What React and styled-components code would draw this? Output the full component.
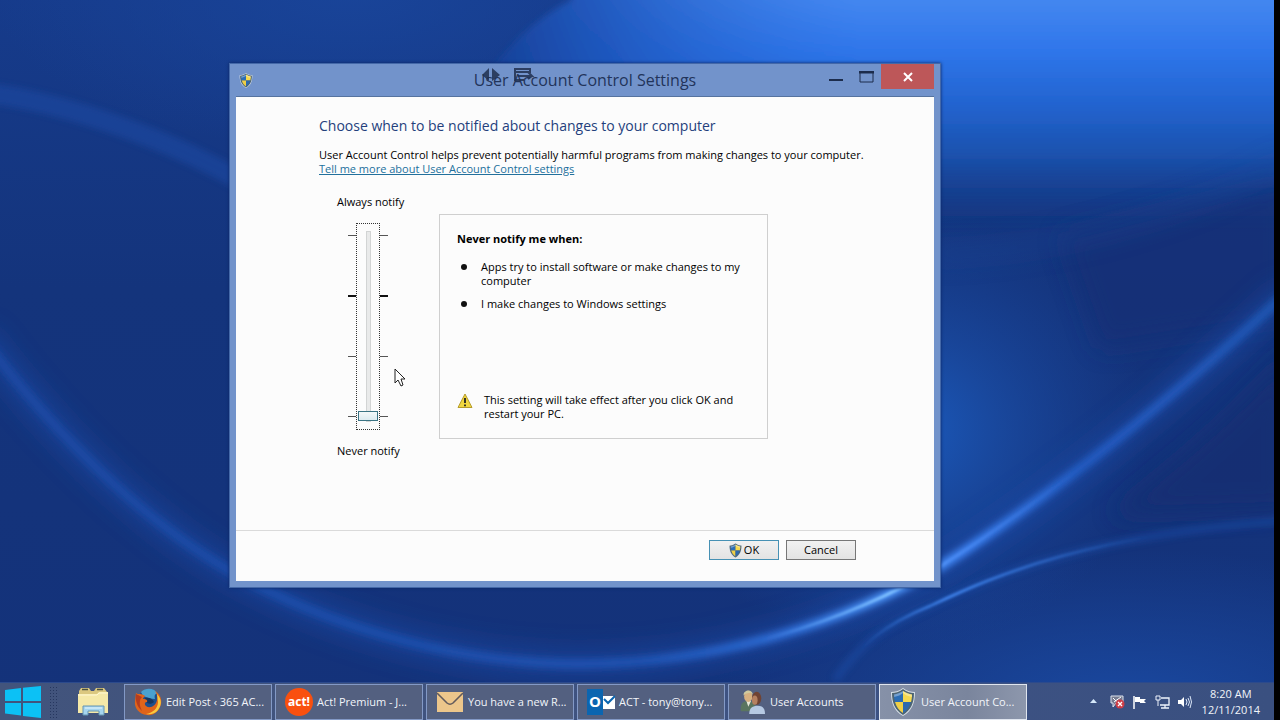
import React, { useState } from 'react';
import styled, { createGlobalStyle } from 'styled-components';

const GlobalStyle = createGlobalStyle`
  * {
    box-sizing: border-box;
  }

  body {
    margin: 0;
    font-family: "Open Sans", "Noto Sans", sans-serif;
    font-size: 11px;
    line-height: 14px;
    color: #000;
  }

  h1, h2, h3, p, ul {
    margin: 0;
    padding: 0;
    font-weight: normal;
  }

  button {
    font: inherit;
    color: inherit;
    padding: 0;
    cursor: pointer;
  }

  svg {
    display: block;
    flex: none;
  }
`;

const Screen = styled.div`
  position: relative;
  display: flex;
  flex-direction: column;
  min-height: 100vh;
  overflow: hidden;
  background: #14347f;
  border-right: 6px solid #000;
`;

const Wallpaper = styled.svg`
  position: absolute;
  top: 0;
  left: 0;
  width: 100%;
  height: 100%;
`;

const Desktop = styled.main`
  position: relative;
  flex: 1;
`;

const Window = styled.section`
  position: absolute;
  top: 63px;
  left: 229px;
  width: 712px;
  padding: 0 6px 6px;
  background: #7293cb;
  border: 1px solid #4468a8;
  box-shadow: 0 0 3px #0c2764;
`;

const TitleBar = styled.header`
  display: grid;
  grid-template-columns: 1fr auto 1fr;
  height: 33px;
  border-bottom: 1px solid #56739f;
`;

const TitleIcon = styled.div`
  align-self: center;
  margin-left: 3px;
`;

const Title = styled.h1`
  position: relative;
  align-self: center;
  font-size: 16px;
  line-height: 20px;
  color: #22345a;
`;

const GhostMarks = styled.svg`
  position: absolute;
  top: -3px;
  left: 8px;
`;

const TitleButtons = styled.div`
  display: flex;
  justify-content: flex-end;
  align-items: flex-start;
`;

const TitleButton = styled.button`
  display: flex;
  align-items: center;
  justify-content: center;
  width: ${(props) => (props.$close ? '53px' : '30px')};
  height: 25px;
  border: none;
  color: ${(props) => (props.$close ? '#fff' : '#1c2c4c')};
  background: ${(props) => (props.$close ? '#bd5759' : 'transparent')};
`;

const Client = styled.div`
  background: #fcfcfc;
`;

const Content = styled.div`
  padding: 19px 60px 72px 83px;
`;

const Heading = styled.h2`
  margin-bottom: 12px;
  font-size: 14px;
  line-height: 20px;
  color: #243f7c;
`;

const HelpLink = styled.a`
  display: inline-block;
  color: #22709c;
`;

const Settings = styled.div`
  display: flex;
  align-items: flex-start;
  margin-top: 19px;
  padding-left: 18px;
`;

const Level = styled.div`
  display: flex;
  flex-direction: column;
  width: 102px;
`;

const SliderRow = styled.div`
  display: flex;
  margin: 14px 0;
  padding-left: 11px;
`;

const Ticks = styled.div`
  display: flex;
  flex-direction: column;
  justify-content: space-between;
  height: 207px;
  padding: 12px 0 13px;
`;

const Tick = styled.span`
  width: 8px;
  height: ${(props) => (props.$strong ? '2px' : '1px')};
  background: ${(props) => (props.$strong ? '#111' : '#555')};
`;

const Slider = styled.input`
  appearance: none;
  writing-mode: vertical-lr;
  direction: rtl;
  width: 24px;
  height: 207px;
  margin: 0;
  padding: 7px 0;
  border: 1px dotted #333;
  outline: none;
  background: transparent;

  &::-webkit-slider-runnable-track {
    width: 5px;
    height: 100%;
    margin: 0 auto;
    background: #e9eaea;
    border: 1px solid #d2d4d4;
  }

  &::-webkit-slider-thumb {
    appearance: none;
    width: 20px;
    height: 10px;
    margin-left: -9px;
    background: linear-gradient(#f4f9fa, #dcebf0);
    border: 1px solid #3b7484;
  }
`;

const Panel = styled.div`
  display: flex;
  flex-direction: column;
  width: 329px;
  height: 225px;
  margin-top: 19px;
  padding: 17px;
  border: 1px solid #cfcfcf;
`;

const PanelTitle = styled.h3`
  font-size: 11px;
  font-weight: bold;
`;

const Reasons = styled.ul`
  display: flex;
  flex-direction: column;
  gap: 9px;
  margin-top: 14px;
  list-style: none;
`;

const Reason = styled.li`
  display: flex;
  gap: 14px;
  padding-left: 4px;

  &::before {
    content: "";
    flex: none;
    width: 6px;
    height: 6px;
    margin-top: 4px;
    border-radius: 50%;
    background: #111;
  }
`;

const Warning = styled.div`
  display: flex;
  gap: 11px;
  margin-top: auto;
  padding-right: 16px;
`;

const Footer = styled.footer`
  display: flex;
  justify-content: flex-end;
  gap: 7px;
  padding: 9px 78px 21px;
  border-top: 1px solid #dadada;
`;

const DialogButton = styled.button`
  display: flex;
  align-items: center;
  justify-content: center;
  gap: 2px;
  width: 70px;
  height: 20px;
  background: linear-gradient(#f1f1f1, #e3e3e3);
  border: 1px solid ${(props) => (props.$primary ? '#4791b4' : '#777')};
`;

const Cursor = styled.svg`
  position: absolute;
  top: 368px;
  left: 394px;
`;

const Taskbar = styled.nav`
  position: relative;
  display: flex;
  align-items: center;
  height: 38px;
  padding-left: 5px;
  background: linear-gradient(90deg, #42547c, #3d5283 70%, #3a5080);
  border-top: 1px solid #2c4a8c;
  color: #f2f5fa;
`;

const LaunchButton = styled.button`
  border: none;
  background: transparent;
`;

const Grip = styled.div`
  width: 10px;
  height: 32px;
  margin: 0 18px 0 7px;
  background: radial-gradient(circle, #26375f 1px, transparent 1px) 0 0 / 3px 3px;
`;

const Tasks = styled.div`
  display: flex;
  gap: 3px;
  margin-left: 15px;
`;

const TaskButton = styled.button`
  display: flex;
  align-items: center;
  gap: 4px;
  width: 148px;
  height: 36px;
  padding-left: 9px;
  white-space: nowrap;
  border: 1px solid ${(props) => (props.$active ? '#dfe5ef' : '#8399c6')};
  background: ${(props) =>
    props.$active ? 'linear-gradient(90deg, #8691a8, #7a859d 60%, #8d97ac)' : '#536080'};
`;

const Tray = styled.div`
  display: flex;
  align-items: center;
  gap: 8px;
  margin-left: auto;
  padding-right: 14px;
`;

const TrayArrow = styled.svg`
  margin-right: 5px;
`;

const Clock = styled.time`
  display: flex;
  flex-direction: column;
  align-items: center;
  margin-left: 2px;
  line-height: 16px;
`;

function Shield({ width, height }) {
  return (
    <svg width={width} height={height} viewBox="0 0 24 28" aria-hidden="true">
      <path d="M12 0C8 3 4 4 0 4C0 15 3 23 12 28C21 23 24 15 24 4C20 4 16 3 12 0Z" fill="#d9e0e6" />
      <path d="M12 1C8 4 4 5 1 5C1 15 4 22 12 27C20 22 23 15 23 5C20 5 16 4 12 1Z" fill="#4d6473" />
      <path d="M12 3C9 5 6 6 3 6.500C3 9 3.200 11.500 4 14H12Z" fill="#2b6db5" />
      <path d="M12 3C15 5 18 6 21 6.500C21 9 20.800 11.500 20 14H12Z" fill="#f5d94f" />
      <path d="M4 14C5.500 19 8 22.500 12 25V14Z" fill="#f0cf45" />
      <path d="M20 14C18.500 19 16 22.500 12 25V14Z" fill="#2c68ae" />
      <path d="M12 3C9 5 6 6 3 6.500L3.200 9C7 8 10 7 12 5C14 7 17 8 20.800 9L21 6.500C18 6 15 5 12 3Z" fill="#fff" opacity=".35" />
    </svg>
  );
}

function WarningIcon() {
  return (
    <svg width="16" height="16" viewBox="0 0 16 16" aria-hidden="true">
      <path d="M8 1L15 14.500H1Z" fill="#f1d73f" stroke="#b59b2b" strokeLinejoin="round" />
      <path d="M8 5V10M8 11.500V13.300" stroke="#222" strokeWidth="1.800" />
    </svg>
  );
}

function WindowsLogo() {
  return (
    <svg width="37" height="32" viewBox="0 0 37 32" aria-hidden="true">
      <path d="M0 4L16 2V15H0ZM18 1.800L36 0V15H18ZM0 17H16V29.500L0 27.500ZM18 17H36V32L18 30Z" fill="#0cc1f5" />
    </svg>
  );
}

function FolderIcon() {
  return (
    <svg width="32" height="30" viewBox="0 0 32 30" aria-hidden="true">
      <path d="M2 4L4 1H12L14 4H17L19 1H27L30 5V25H2Z" fill="#dbc880" />
      <path d="M5 2.500H11M20 2.500H26" stroke="#4b5240" strokeWidth="1.500" />
      <path d="M1 7H20L22 5H31V26H1Z" fill="#f5e9a8" />
      <path d="M1 8H20L22 6H31" stroke="#fff8d3" fill="none" />
      <path d="M6 19H27V28H22V24H11V28H6Z" fill="#a6d5ee" stroke="#6495b3" />
      <path d="M8 21H25" stroke="#e5f7ff" />
    </svg>
  );
}

function FirefoxIcon() {
  return (
    <svg width="28" height="28" viewBox="0 0 28 28" aria-hidden="true">
      <circle cx="15" cy="12" r="11" fill="#1f4f8c" />
      <path d="M7 4C12 -1 21 0 24 6C21 5 20 8 21 11C17 11 13 9 9 8Z" fill="#4aa0cf" />
      <path d="M11 10C15 9 19 11 20 14C17 17 13 16 12 13Z" fill="#17365f" />
      <path d="M2 5C3 6 4 6 6 6C8 6 10 7 11 8C10 9 9 10 9 11C12 11 14 12 13 14C11 14 10 16 12 18C16 21 22 18 23 12C24 9 23 6 21 3C26 6 28 11 27 16C25 24 19 28 13 27C5 26 0 20 1 13Z" fill="#e0641a" />
      <path d="M23 6C28 11 28 17 24 22C21 26 16 27 12 26C19 25 24 20 24 14Z" fill="#f8c93f" />
      <path d="M2 6C1 12 3 19 8 23C5 17 5 12 8 9Z" fill="#b63c1d" />
    </svg>
  );
}

const ActBadge = styled.span`
  width: 28px;
  height: 28px;
  border-radius: 50%;
  background: #f9500f;
  color: #fff;
  font-size: 12px;
  font-weight: bold;
  line-height: 27px;
  text-align: center;
`;

function MailIcon() {
  return (
    <svg width="28" height="22" viewBox="0 0 28 22" aria-hidden="true">
      <path d="M1 1H27V21H1Z" fill="#ecc68b" />
      <path d="M1 2L11 12Q14 14.500 17 12L27 2" fill="none" stroke="#625b5c" strokeWidth="1.600" />
    </svg>
  );
}

const OutlookBadge = styled.span`
  display: grid;
  grid-template-columns: 16px 12px;
  align-items: center;
  width: 28px;
  height: 28px;
  color: #fff;
`;

const OutlookLetter = styled.span`
  height: 26px;
  background: #0b65b0;
  font-size: 15px;
  font-weight: bold;
  line-height: 25px;
  text-align: center;
`;

function OutlookIcon() {
  return (
    <OutlookBadge aria-hidden="true">
      <OutlookLetter>O</OutlookLetter>
      <svg width="12" height="16" viewBox="0 0 12 16">
        <path d="M0 2H12V15H0Z" fill="#fff" />
        <path d="M1 5L5 9L12 2" fill="none" stroke="#0b65b0" strokeWidth="2" />
      </svg>
    </OutlookBadge>
  );
}

function UsersIcon() {
  return (
    <svg width="28" height="26" viewBox="0 0 30 28" aria-hidden="true">
      <path d="M3 24C2 16 5 13 11 13C17 13 19 17 19 24Z" fill="#5a7560" />
      <path d="M9 13L11 19L14 13Z" fill="#e9e8d8" />
      <ellipse cx="11" cy="8" rx="4.500" ry="6" fill="#d6b081" />
      <path d="M6 7C5 1 15 -1 16 6L13 4L8 5Z" fill="#d0ca9f" />
      <ellipse cx="20" cy="10" rx="5" ry="7" fill="#704333" />
      <ellipse cx="18" cy="12" rx="3" ry="5" fill="#b68161" />
      <path d="M12 27C12 20 16 18 21 18C27 18 29 21 29 27Z" fill="#b6c9e3" />
    </svg>
  );
}

function TrayIcons() {
  return (
    <>
      <TrayArrow width="7" height="5" viewBox="0 0 7 5" role="img" aria-label="Show hidden icons">
        <path d="M0 4L3.500 0L7 4Z" fill="#d5e8fa" />
      </TrayArrow>
      <svg width="15" height="14" viewBox="0 0 15 14" role="img" aria-label="Device disconnected">
        <path d="M1 1H13V8H6L3 12V8H1Z" fill="#747b91" stroke="#dce2ec" />
        <path d="M3 3L7 7M4 7L11 2" stroke="#fff" />
        <circle cx="10" cy="9" r="4.500" fill="#cc3e48" />
        <path d="M8 7L12 11M12 7L8 11" stroke="#fff" strokeWidth="1.300" />
      </svg>
      <svg width="14" height="14" viewBox="0 0 14 14" role="img" aria-label="Action center">
        <path d="M1 1V14" stroke="#fff" strokeWidth="1.500" />
        <path d="M2 2H7V4H13L11 6L13 8H7V7H2Z" fill="#fff" />
      </svg>
      <svg width="15" height="14" viewBox="0 0 15 14" role="img" aria-label="Network">
        <path d="M6 3H14V10H5M10 10V13M6 13H14" fill="none" stroke="#eef3fc" strokeWidth="1.300" />
        <path d="M1 1V5H5V1M2 0V2M4 0V2M3 5V11" fill="none" stroke="#eef3fc" />
      </svg>
      <svg width="14" height="14" viewBox="0 0 14 14" role="img" aria-label="Volume">
        <path d="M0 5H3L6 2V12L3 9H0Z" fill="#fff" />
        <path d="M8 4Q10 7 8 10M10 3Q13 7 10 11M12 1Q15 7 12 13" fill="none" stroke="#dce7f8" />
      </svg>
    </>
  );
}

const arcPath =
  'M-20 335C70 455 170 545 270 592C370 640 480 664 580 664C720 664 850 620 941 566C1060 490 1170 400 1290 290';

const streakPath = 'M835 680C860 645 885 624 930 606C1000 573 1090 535 1290 520';

function Background() {
  return (
    <Wallpaper viewBox="0 0 1274 720" preserveAspectRatio="none" aria-hidden="true">
      <defs>
        <linearGradient id="base" x1="0" y1="0" x2="0" y2="1">
          <stop offset="0" stopColor="#163b8b" />
          <stop offset=".4" stopColor="#14347c" />
          <stop offset="1" stopColor="#14327a" />
        </linearGradient>
        <linearGradient id="sky" gradientUnits="userSpaceOnUse" x1="0" y1="0" x2="0" y2="230">
          <stop offset="0" stopColor="#4487f0" />
          <stop offset=".22" stopColor="#2f76ea" />
          <stop offset=".45" stopColor="#2364d0" />
          <stop offset=".66" stopColor="#1b53b0" />
          <stop offset=".85" stopColor="#174396" stopOpacity=".6" />
          <stop offset="1" stopColor="#163a87" stopOpacity="0" />
        </linearGradient>
        <linearGradient id="skyShade" gradientUnits="userSpaceOnUse" x1="500" y1="60" x2="860" y2="0">
          <stop offset="0" stopColor="#17429a" />
          <stop offset=".3" stopColor="#1b50b4" stopOpacity=".8" />
          <stop offset="1" stopColor="#2569da" stopOpacity="0" />
        </linearGradient>
        <radialGradient id="leftGlow" gradientUnits="userSpaceOnUse" cx="0" cy="0" r="1" gradientTransform="translate(350 -10) scale(360 160)">
          <stop offset="0" stopColor="#194499" />
          <stop offset="1" stopColor="#194499" stopOpacity="0" />
        </radialGradient>
        <radialGradient id="rightGlow" gradientUnits="userSpaceOnUse" cx="0" cy="0" r="1" gradientTransform="translate(900 430) scale(250 220)">
          <stop offset="0" stopColor="#1b5cc0" />
          <stop offset=".4" stopColor="#1a4ca4" stopOpacity=".8" />
          <stop offset="1" stopColor="#184398" stopOpacity="0" />
        </radialGradient>
        <radialGradient id="bottomGlow" gradientUnits="userSpaceOnUse" cx="0" cy="0" r="1" gradientTransform="translate(1130 700) scale(420 150)">
          <stop offset="0" stopColor="#1a489f" />
          <stop offset="1" stopColor="#1a489f" stopOpacity="0" />
        </radialGradient>
        <linearGradient id="arc" gradientUnits="userSpaceOnUse" x1="0" y1="0" x2="1274" y2="0">
          <stop offset="0" stopColor="#1c4fae" stopOpacity=".6" />
          <stop offset=".5" stopColor="#2056b8" stopOpacity=".8" />
          <stop offset=".62" stopColor="#2f6dd6" />
          <stop offset=".7" stopColor="#4c92f6" />
          <stop offset=".76" stopColor="#3b7dec" />
          <stop offset=".85" stopColor="#225ac0" />
          <stop offset="1" stopColor="#1f54b0" />
        </linearGradient>
        <linearGradient id="arcShine" gradientUnits="userSpaceOnUse" x1="760" y1="0" x2="1080" y2="0">
          <stop offset="0" stopColor="#5fa6ff" stopOpacity="0" />
          <stop offset=".4" stopColor="#80c2ff" />
          <stop offset=".6" stopColor="#4f90f8" stopOpacity=".7" />
          <stop offset="1" stopColor="#3676e0" stopOpacity="0" />
        </linearGradient>
        <linearGradient id="streakShine" gradientUnits="userSpaceOnUse" x1="860" y1="0" x2="1150" y2="0">
          <stop offset="0" stopColor="#3878dc" stopOpacity="0" />
          <stop offset=".3" stopColor="#3c7de4" />
          <stop offset="1" stopColor="#3878dc" stopOpacity="0" />
        </linearGradient>
        <filter id="soft" x="-20%" y="-20%" width="140%" height="140%">
          <feGaussianBlur stdDeviation="3" />
        </filter>
        <filter id="fine" x="-20%" y="-20%" width="140%" height="140%">
          <feGaussianBlur stdDeviation="1" />
        </filter>
        <filter id="wide" x="-20%" y="-50%" width="140%" height="200%">
          <feGaussianBlur stdDeviation="12" />
        </filter>
      </defs>
      <rect width="1274" height="720" fill="url(#base)" />
      <rect width="1274" height="720" fill="url(#leftGlow)" />
      <rect width="1274" height="720" fill="url(#bottomGlow)" />
      <rect width="1274" height="720" fill="url(#rightGlow)" />
      <g filter="url(#soft)">
        <path d="M572 -20V0Q515 30 480 90V240H1300V-20Z" fill="url(#sky)" />
        <path d="M572 -20V0Q515 30 480 90V240H1300V-20Z" fill="url(#skyShade)" />
      </g>
      <path d="M1060 235C1140 215 1200 200 1290 180V320L1100 350Z" fill="#142f74" opacity=".6" filter="url(#wide)" />
      <path d="M930 254C1060 252 1180 215 1290 160" fill="none" stroke="#1a4798" strokeWidth="12" opacity=".5" filter="url(#wide)" />
      <path d="M1290 350C1220 430 1150 480 1110 515L1290 510Z" fill="#132e72" opacity=".8" filter="url(#wide)" />
      <path d="M-20 92C50 100 150 130 240 180" fill="none" stroke="#1b4aa2" strokeWidth="20" opacity=".6" filter="url(#soft)" />
      <path d={arcPath} fill="none" stroke="#1a4ca8" strokeWidth="26" opacity=".6" filter="url(#wide)" />
      <path d={arcPath} fill="none" stroke="url(#arc)" strokeWidth="10" filter="url(#soft)" />
      <path d={arcPath} fill="none" stroke="url(#arcShine)" strokeWidth="3" filter="url(#fine)" />
      <path d={streakPath} fill="none" stroke="#1c4ea8" strokeWidth="8" opacity=".5" filter="url(#soft)" />
      <path d={streakPath} fill="none" stroke="url(#streakShine)" strokeWidth="3" filter="url(#fine)" />
    </Wallpaper>
  );
}

const tasks = [
  { label: 'Edit Post ‹ 365 AC...', icon: <FirefoxIcon /> },
  { label: 'Act! Premium - J...', icon: <ActBadge aria-hidden="true">act!</ActBadge> },
  { label: 'You have a new R...', icon: <MailIcon /> },
  { label: 'ACT - tony@tony...', icon: <OutlookIcon /> },
  { label: 'User Accounts', icon: <UsersIcon /> },
  { label: 'User Account Co...', icon: <Shield width={28} height={28} />, active: true },
];

function TickMarks() {
  return (
    <Ticks aria-hidden="true">
      <Tick />
      <Tick $strong />
      <Tick />
      <Tick />
    </Ticks>
  );
}

function App() {
  const [level, setLevel] = useState(0);

  return (
    <Screen>
      <GlobalStyle />
      <Background />
      <Desktop>
        <Window>
          <TitleBar>
            <TitleIcon>
              <Shield width={14} height={15} />
            </TitleIcon>
            <Title>
              User Account Control Settings
              <GhostMarks width="54" height="16" viewBox="0 0 54 16" aria-hidden="true">
                <path d="M0 8L7 1V14ZM10 1L18 8L10 14Z" fill="#202f4f" opacity=".85" />
                <path d="M33 2H48V5H33ZM33 2V13H42M36 9H50L46 5M50 9L46 12" fill="none" stroke="#202f4f" strokeWidth="2" opacity=".85" />
              </GhostMarks>
            </Title>
            <TitleButtons>
              <TitleButton type="button" aria-label="Minimize">
                <svg width="14" height="12" viewBox="0 0 14 12">
                  <path d="M0 9H14" stroke="currentColor" strokeWidth="2" />
                </svg>
              </TitleButton>
              <TitleButton type="button" aria-label="Maximize">
                <svg width="15" height="12" viewBox="0 0 15 12">
                  <path d="M1 1H14V11H1Z" fill="none" stroke="currentColor" />
                  <path d="M0 1H15" stroke="currentColor" strokeWidth="3" />
                </svg>
              </TitleButton>
              <TitleButton type="button" aria-label="Close" $close>
                <svg width="10" height="10" viewBox="0 0 10 10">
                  <path d="M1 1L9 9M9 1L1 9" stroke="currentColor" strokeWidth="2" />
                </svg>
              </TitleButton>
            </TitleButtons>
          </TitleBar>
          <Client>
            <Content>
              <Heading>Choose when to be notified about changes to your computer</Heading>
              <p>
                User Account Control helps prevent potentially harmful programs from making changes to your computer.
              </p>
              <HelpLink href="#help">Tell me more about User Account Control settings</HelpLink>
              <Settings>
                <Level>
                  <label htmlFor="level">Always notify</label>
                  <SliderRow>
                    <TickMarks />
                    <Slider
                      id="level"
                      type="range"
                      min="0"
                      max="3"
                      value={level}
                      onChange={(e) => setLevel(Number(e.target.value))}
                    />
                    <TickMarks />
                  </SliderRow>
                  <label htmlFor="level">Never notify</label>
                </Level>
                <Panel>
                  <PanelTitle>Never notify me when:</PanelTitle>
                  <Reasons>
                    <Reason>Apps try to install software or make changes to my computer</Reason>
                    <Reason>I make changes to Windows settings</Reason>
                  </Reasons>
                  <Warning>
                    <WarningIcon />
                    <p>This setting will take effect after you click OK and restart your PC.</p>
                  </Warning>
                </Panel>
              </Settings>
            </Content>
            <Footer>
              <DialogButton type="button" $primary>
                <Shield width={13} height={15} />
                OK
              </DialogButton>
              <DialogButton type="button">Cancel</DialogButton>
            </Footer>
          </Client>
        </Window>
        <Cursor width="13" height="19" viewBox="0 0 13 19" aria-hidden="true">
          <path d="M1 1V15L4 12L7 18L9 17L7 11H11Z" fill="#fff" stroke="#222" />
        </Cursor>
      </Desktop>
      <Taskbar>
        <LaunchButton type="button" aria-label="Start">
          <WindowsLogo />
        </LaunchButton>
        <Grip />
        <LaunchButton type="button" aria-label="File Explorer">
          <FolderIcon />
        </LaunchButton>
        <Tasks>
          {tasks.map((task) => (
            <TaskButton key={task.label} type="button" $active={task.active}>
              {task.icon}
              {task.label}
            </TaskButton>
          ))}
        </Tasks>
        <Tray>
          <TrayIcons />
          <Clock>
            <span>8:20 AM</span>
            <span>12/11/2014</span>
          </Clock>
        </Tray>
      </Taskbar>
    </Screen>
  );
}

export default App;
